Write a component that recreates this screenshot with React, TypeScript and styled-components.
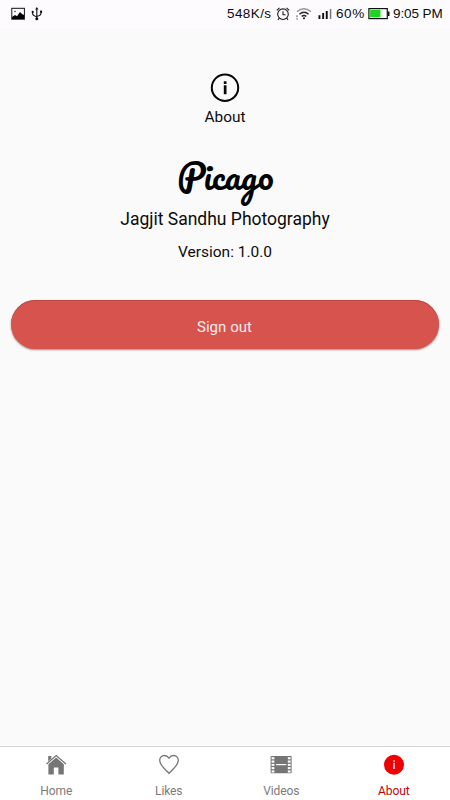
import React from "react";
import styled, { createGlobalStyle } from "styled-components";

const GlobalStyle = createGlobalStyle`
  * { box-sizing: border-box; }
  body { margin: 0; background: #fafafa; }
`;

const Screen = styled.div`
  display: flex;
  flex-direction: column;
  width: 450px;
  height: 800px;
  overflow: hidden;
  background: #fafafa;
  font-family: Roboto, sans-serif;
  color: #0c0c0c;
`;

const StatusBar = styled.header`
  display: flex;
  align-items: center;
  justify-content: space-between;
  height: 28px;
  padding: 0 7px 0 11px;
  background: #fdfbfe;
`;

const StatusGroup = styled.div<{ $gap: number }>`
  display: flex;
  align-items: center;
  gap: ${(p) => p.$gap}px;
`;

const StatusText = styled.span<{ $width: number; $spacing?: number }>`
  width: ${(p) => p.$width}px;
  font: 13.5px/28px "Liberation Sans", Arial, sans-serif;
  letter-spacing: ${(p) => p.$spacing ?? 0}px;
  white-space: nowrap;
`;

const Icon = styled.svg`
  display: block;
  flex: none;
`;

const Content = styled.main`
  flex: 1;
  display: flex;
  flex-direction: column;
  align-items: center;
  padding: 44px 11px 0 11px;
`;

const SectionTitle = styled.h1`
  margin: 3px 0 0;
  font-size: 15.4px;
  line-height: 20px;
  font-weight: 400;
`;

const Wordmark = styled.div`
  height: 57px;
  margin-top: 23px;
  padding-left: 1px;
  font: 400 35px/50px Pacifico, Lato, cursive;
  color: #000;
`;

const Company = styled.p`
  margin: 0;
  font-size: 17.5px;
  line-height: 24px;
`;

const Version = styled.p`
  margin: 11px 0 0;
  font-size: 15.5px;
  line-height: 20px;
`;

const SignOutButton = styled.button`
  align-self: stretch;
  height: 49px;
  margin-top: 38px;
  padding: 4px 1px 0 0;
  border: 0;
  border-radius: 25px;
  background: #d6534e;
  box-shadow: inset 0 1px 0 #bd4642, 0 1px 2px rgba(90, 20, 20, 0.5);
  color: #fbeceb;
  font: 15px/20px Roboto, sans-serif;
  letter-spacing: 0.05px;
`;

const TabBar = styled.nav`
  display: grid;
  grid-template-columns: repeat(4, 1fr);
  height: 54px;
  border-top: 1px solid #d4d4d4;
  background: #fff;
`;

const Tab = styled.a<{ $active?: boolean }>`
  display: flex;
  flex-direction: column;
  align-items: center;
  gap: 7px;
  padding-top: 6px;
  color: ${(p) => (p.$active ? "#f00000" : "#757575")};
`;

const TabLabel = styled.span<{ $active?: boolean }>`
  font-size: 12px;
  line-height: 16px;
  letter-spacing: -0.1px;
  color: ${(p) => (p.$active ? "#b80808" : "#7b7b7b")};
`;

const PictureIcon = () => (
  <Icon width="14" height="14" viewBox="0 0 14 14">
    <rect x="0.8" y="1.3" width="12.6" height="10.9" fill="#fff" stroke="#111" />
    <path d="M1 12V10l3-2 2 1.2L9 5l2 2 2 1v4z" fill="#000" />
    <circle cx="4" cy="4.5" r=".8" fill="#333" />
  </Icon>
);

const UsbIcon = () => (
  <Icon width="12" height="14" viewBox="0 0 12 14" fill="none" stroke="#111" strokeWidth="1.1">
    <path d="M5.8 2v9M1.6 5v1.6q0 2.2 4.2 3.2M10 4.8v1.4q0 2.2-4.2 3.2" />
    <path d="M4.2 2.4 5.8 0l1.6 2.4z" fill="#111" stroke="none" />
    <circle cx="1.7" cy="4.9" r="1.1" fill="#111" stroke="none" />
    <path d="M9 3.6h2.1v2.2H9z" fill="#111" stroke="none" />
    <circle cx="5.8" cy="11.8" r="1.5" fill="#111" stroke="none" />
  </Icon>
);

const AlarmIcon = () => (
  <Icon width="14" height="14" viewBox="0 0 14 14" fill="none" stroke="#1b1b1b" strokeWidth="1.1">
    <circle cx="7" cy="7.2" r="5.3" />
    <path d="M7 4.2v3.5h2.6M.8 3.3 3.5.8M10.5.8l2.7 2.5M3.3 11.2 2 12.8M10.7 11.2 12 12.8" />
  </Icon>
);

const WifiIcon = () => (
  <Icon width="16" height="14" viewBox="0 0 16 14" fill="none" strokeWidth="1.4">
    <path d="M1 4.6q7-5.6 14 0" stroke="#999" />
    <path d="M3.4 7.2q4.6-4 9.2 0M5.7 9.4q2.3-2 4.6 0" stroke="#222" />
    <circle cx="8" cy="11.2" r="1" fill="#111" />
    <path d="M1 8.2v2M1 11.2v1.5" stroke="#888" />
  </Icon>
);

const SignalIcon = () => (
  <Icon width="14" height="14" viewBox="0 0 14 14" fill="#111">
    <path d="M.5 8.3h1.9V12H.5zM4.2 6h1.9v6H4.2zM7.8 4h1.9v8H7.8z" />
    <path d="M11.8 2h1.5v10h-1.5z" fill="#777" />
  </Icon>
);

const BatteryIcon = () => (
  <Icon width="22" height="14" viewBox="0 0 22 14">
    <rect x=".9" y="1.6" width="18.4" height="10" fill="#fff" stroke="#111" strokeWidth="1.2" />
    <path d="M2.1 2.8h10.4v7.5H2.1z" fill="#20d321" />
    <path d="M19.7 4.5h1.8V9h-1.8z" fill="#111" />
  </Icon>
);

const AboutIcon = () => (
  <Icon width="30" height="32" viewBox="0 0 30 32">
    <circle cx="15" cy="15.7" r="13.2" fill="none" stroke="#080808" strokeWidth="2" />
    <path d="M13.8 9.3h2.7v2.6h-2.7zM13.8 13.2h2.7v9h-2.7z" fill="#080808" />
  </Icon>
);

const HomeIcon = () => (
  <Icon width="22" height="23" viewBox="0 0 22 23" fill="currentColor">
    <path d="M3.2 3h3.1v2.7L3.2 8.3z" />
    <path d="M1.5 11 11.2 2.5l9.7 8.5" fill="none" stroke="currentColor" strokeWidth="1.3" />
    <path d="M11.2 4.4 3.4 11.3v10.3h5.4v-7h4.6v7h5.4V11.3z" />
  </Icon>
);

const HeartIcon = () => (
  <Icon width="22" height="23" viewBox="0 0 22 23" fill="none" stroke="currentColor" strokeWidth="1.3">
    <path d="M11 5.1C9.7 3.2 8.1 2.5 6.3 2.5 3.7 2.5 1.7 4.7 1.7 7.3c0 4.9 5.5 9 9.3 13.1 3.8-4.1 9.3-8.2 9.3-13.1 0-2.6-2-4.8-4.6-4.8-1.8 0-3.4.7-4.7 2.6z" />
  </Icon>
);

const filmHoles = [4.2, 7.5, 10.8, 14.1, 17.4];

const FilmIcon = () => (
  <Icon width="22" height="23" viewBox="0 0 22 23">
    <rect x=".6" y="3" width="21" height="17.3" rx=".8" fill="currentColor" />
    {filmHoles.map((y) => (
      <React.Fragment key={y}>
        <rect x="1.6" y={y} width="2.8" height="2.1" fill="#fff" />
        <rect x="17.8" y={y} width="2.8" height="2.1" fill="#fff" />
      </React.Fragment>
    ))}
    <path d="M6 11.6h10.3" stroke="#fff" strokeWidth="1.2" />
  </Icon>
);

const InfoIcon = () => (
  <Icon width="22" height="23" viewBox="0 0 22 23">
    <circle cx="11" cy="11.8" r="10" fill="currentColor" />
    <path d="M10.3 7.2h1.4v1.6h-1.4zM10.3 9.8h1.4v6.3h-1.4z" fill="#fff" />
  </Icon>
);

const tabs = [
  { label: "Home", icon: HomeIcon },
  { label: "Likes", icon: HeartIcon },
  { label: "Videos", icon: FilmIcon },
  { label: "About", icon: InfoIcon, active: true },
];

export default function App() {
  return (
    <Screen>
      <GlobalStyle />
      <StatusBar>
        <StatusGroup $gap={6}>
          <PictureIcon />
          <UsbIcon />
        </StatusGroup>
        <StatusGroup $gap={4}>
          <StatusText $width={45} $spacing={0.4}>548K/s</StatusText>
          <StatusGroup $gap={6}>
            <AlarmIcon />
            <WifiIcon />
            <SignalIcon />
          </StatusGroup>
          <StatusGroup $gap={3}>
            <StatusText $width={29} $spacing={0.6}>60%</StatusText>
            <BatteryIcon />
            <StatusText $width={50} $spacing={-0.1}>9:05 PM</StatusText>
          </StatusGroup>
        </StatusGroup>
      </StatusBar>
      <Content>
        <AboutIcon />
        <SectionTitle>About</SectionTitle>
        <Wordmark>Picago</Wordmark>
        <Company>Jagjit Sandhu Photography</Company>
        <Version>Version: 1.0.0</Version>
        <SignOutButton>Sign out</SignOutButton>
      </Content>
      <TabBar>
        {tabs.map(({ label, icon: TabIcon, active }) => (
          <Tab key={label} $active={active}>
            <TabIcon />
            <TabLabel $active={active}>{label}</TabLabel>
          </Tab>
        ))}
      </TabBar>
    </Screen>
  );
}
